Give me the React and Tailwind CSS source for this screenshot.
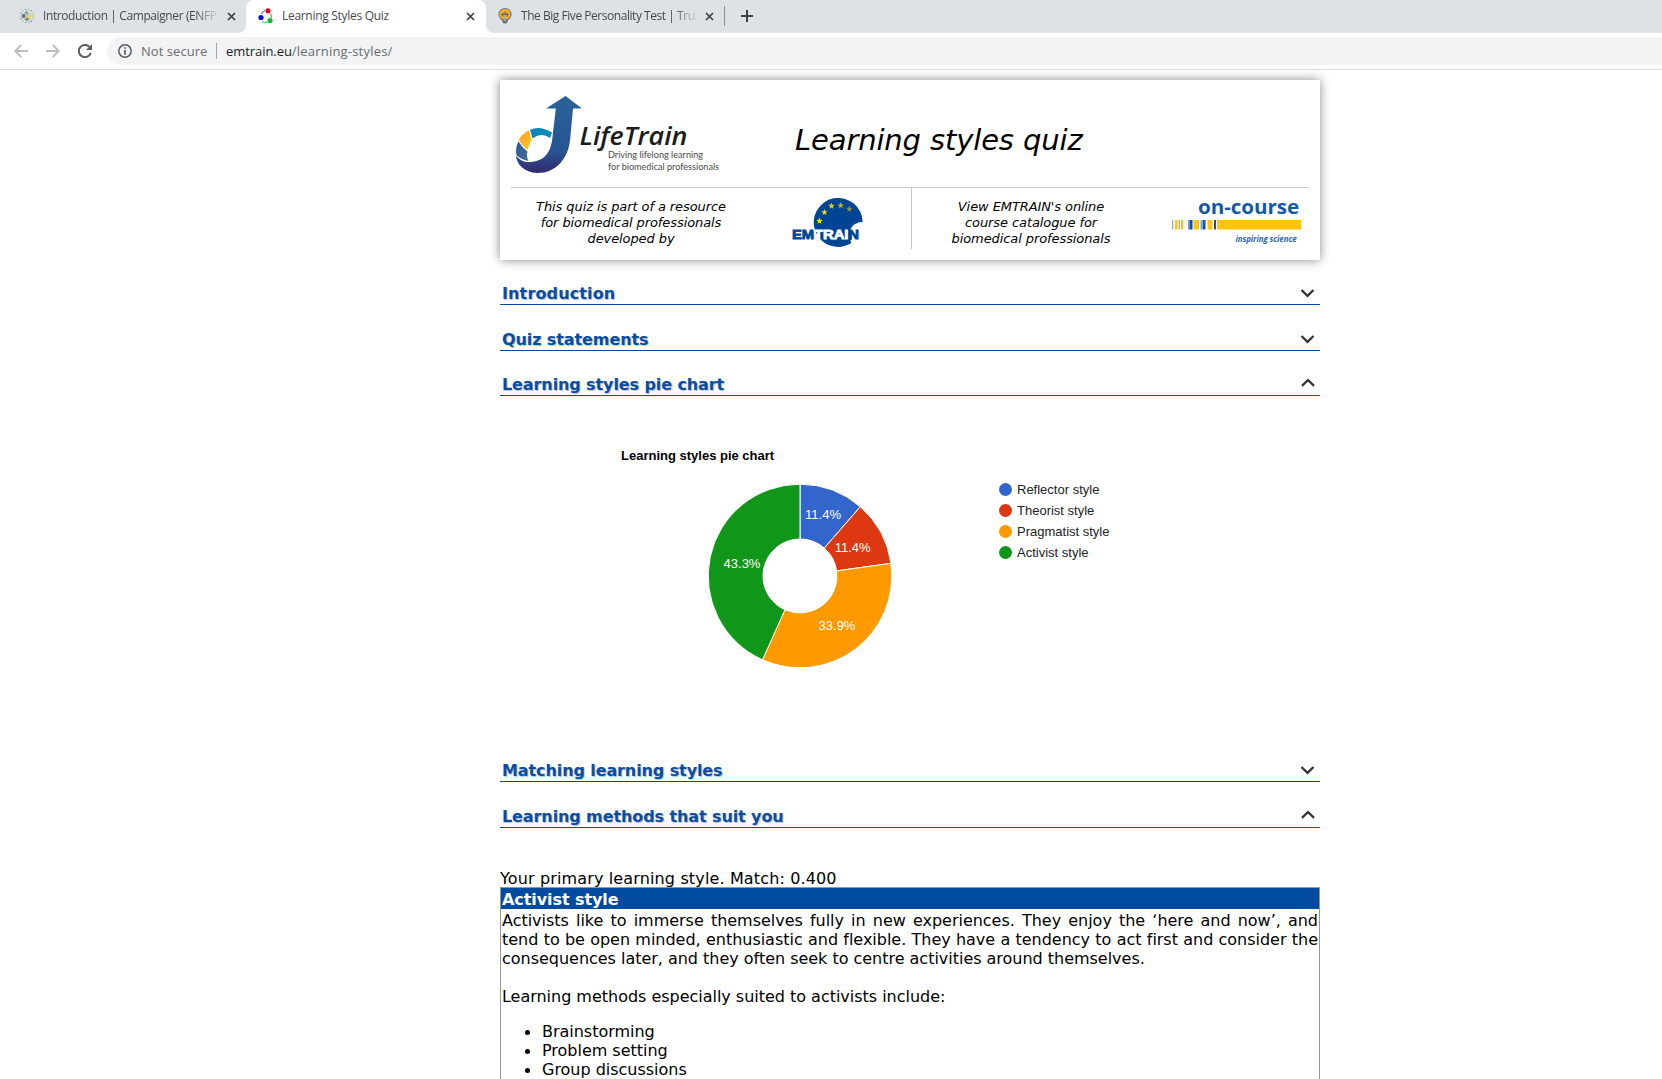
import React from "react";

const UI = "font-['Open_Sans','Noto_Sans',sans-serif]";

function CloseX() {
  return (
    <svg width="9" height="9" viewBox="0 0 9 9" className="shrink-0">
      <path d="M1 1L8 8M8 1L1 8" stroke="#3c4043" strokeWidth="1.7" fill="none" />
    </svg>
  );
}

function DotsFavicon() {
  const ring = Array.from({ length: 14 }, (_, i) => (i * Math.PI * 2) / 14);
  const colors = ["#7fa98a", "#c9c37a", "#8a7f8f", "#8db9a0"];
  return (
    <svg width="16" height="16" viewBox="0 0 16 16" className="shrink-0">
      {ring.map((a, i) => (
        <circle key={i} cx={8 + 6.6 * Math.cos(a)} cy={8 + 6.6 * Math.sin(a)} r="0.8" fill={colors[i % 4]} />
      ))}
      <circle cx="8" cy="8" r="4.6" fill="#c4cfc9" />
      <circle cx="7.5" cy="4.8" r="1.7" fill="#6fb3a5" />
      <circle cx="11" cy="8.2" r="2" fill="#f0dc3c" />
      <circle cx="4.6" cy="8" r="1.9" fill="#84607c" />
      <circle cx="8" cy="11.3" r="1.8" fill="#6f9b62" />
    </svg>
  );
}

function CycleFavicon() {
  return (
    <svg width="16" height="16" viewBox="0 0 16 16" className="shrink-0">
      <path d="M7 2.5Q4.300 3.500 3.500 6" stroke="#5d66e8" strokeWidth="1.100" fill="none" />
      <path d="M12.500 5.500Q14 8 13 10.500" stroke="#ec5a4a" strokeWidth="1.100" fill="none" />
      <path d="M4.500 13.500Q7 15.500 9.500 13.800" stroke="#38e03c" strokeWidth="1.200" fill="none" />
      <circle cx="10" cy="2.800" r="2.600" fill="#dc0c18" />
      <circle cx="3" cy="9.500" r="2.600" fill="#0a0adc" />
      <circle cx="12" cy="12.500" r="2.600" fill="#12b832" />
    </svg>
  );
}

function BulbFavicon() {
  return (
    <svg width="14" height="16" viewBox="0 0 14 16" className="shrink-0">
      <path d="M7 .7C3.300.7.900 3.200.900 6.300c0 2.400 1.500 3.500 2.600 5.200h7c1.100-1.700 2.600-2.800 2.600-5.200C13.100 3.200 10.700.7 7 .7z" fill="#f7b21f" stroke="#7b7b80" strokeWidth="1.200" />
      <path d="M4.200 11.500h5.600v2L8.500 15.400h-3L4.200 13.500z" fill="#77777c" />
      <path d="M3 6.500h8M7 3.500v9M4.800 4.500v4M9.200 4.500v4" stroke="#66666b" strokeWidth="1.200" fill="none" />
      <path d="M7 7v6" stroke="#eee" strokeWidth=".8" />
    </svg>
  );
}

function TabStrip() {
  return (
    <div className={`flex h-[33px] bg-[#dee1e6] text-xs text-[#45494d] ${UI}`}>
      <div className="flex h-full w-[246px] items-center pb-px pl-[19px]">
        <DotsFavicon />
        <div className="ml-2 w-[174px] overflow-hidden whitespace-nowrap leading-[30px] tracking-[-0.4px] [mask-image:linear-gradient(to_right,#000_152px,transparent_176px)]">
          Introduction | Campaigner (ENFP
        </div>
        <div className="ml-[9.500px] flex"><CloseX /></div>
      </div>
      <div className="relative flex h-full w-[240px] items-center rounded-t-lg bg-white pb-px pl-3">
        <svg width="8" height="8" viewBox="0 0 8 8" className="absolute bottom-0 -left-2"><path d="M8 0V8H0A8 8 0 0 0 8 0z" fill="#fff" /></svg>
        <svg width="8" height="8" viewBox="0 0 8 8" className="absolute bottom-0 -right-2"><path d="M0 0V8H8A8 8 0 0 1 0 0z" fill="#fff" /></svg>
        <CycleFavicon />
        <div className="ml-2 w-[174px] whitespace-nowrap leading-[30px] tracking-[-0.3px]">Learning Styles Quiz</div>
        <div className="ml-[9.500px] flex"><CloseX /></div>
      </div>
      <div className="flex h-full w-[238px] items-center pb-px pl-3">
        <BulbFavicon />
        <div className="ml-[9px] w-[175px] overflow-hidden whitespace-nowrap leading-[30px] tracking-[-0.46px] [mask-image:linear-gradient(to_right,#000_152px,transparent_178px)]">
          The Big Five Personality Test | Trui
        </div>
        <div className="ml-[8.500px] flex"><CloseX /></div>
      </div>
      <div className="mt-1.5 h-5 w-px bg-[#8a8d91]" />
      <svg width="12" height="12" viewBox="0 0 12 12" className="ml-4 mt-2.5">
        <path d="M6 0V12M0 6H12" stroke="#3c4043" strokeWidth="2" />
      </svg>
    </div>
  );
}

function Toolbar() {
  return (
    <div className={`flex h-[37px] items-center border-b border-[#dadce0] bg-white pl-[14px] text-[13px] ${UI}`}>
      <svg width="14" height="14" viewBox="0 0 14 14" className="shrink-0"><path d="M14 7H1.500M7.300.8L1.200 7l6.100 6.200" stroke="#babcbe" strokeWidth="1.800" fill="none" /></svg>
      <svg width="14" height="14" viewBox="0 0 14 14" className="ml-[18px] shrink-0"><path d="M0 7H12.500M6.700.8L12.800 7l-6.100 6.200" stroke="#babcbe" strokeWidth="1.800" fill="none" /></svg>
      <svg width="14" height="14" viewBox="0 0 14 14" className="ml-[18px] shrink-0">
        <path d="M12.800 8.800A6.100 6.100 0 1 1 11.300 2.700" stroke="#5a5d61" strokeWidth="2" fill="none" />
        <path d="M14 0V6H8z" fill="#5a5d61" />
      </svg>
      <div className="ml-[15px] flex h-7 flex-1 items-center rounded-l-full bg-[#f1f3f4] pl-[11px]">
        <svg width="14" height="14" viewBox="0 0 14 14" className="shrink-0">
          <circle cx="7" cy="7" r="6.200" fill="none" stroke="#5a5d61" strokeWidth="1.500" />
          <path d="M7 6V10.800M7 3.200V4.800" stroke="#5a5d61" strokeWidth="1.700" />
        </svg>
        <span className="ml-[9px] w-[75px] pt-0.5 tracking-[0.05px] text-[#696d71]">Not secure</span>
        <span className="h-4 w-px bg-[#a3a6a9]" />
        <span className="ml-[9px] pt-0.5 tracking-[-0.06px] text-[#202124]">emtrain.eu<span className="tracking-[0.2px] text-[#686c70]">/learning-styles/</span></span>
      </div>
    </div>
  );
}

function LifeTrainLogo() {
  return (
    <svg width="220" height="90" viewBox="510 90 220 90" className="shrink-0">
      <defs>
        <linearGradient id="hook" x1="0" y1="0" x2="0" y2="1">
          <stop offset="0" stopColor="#2a6299" />
          <stop offset=".72" stopColor="#265592" />
          <stop offset="1" stopColor="#34286c" />
        </linearGradient>
        <linearGradient id="amber" x1="0" y1="0" x2="1" y2="1">
          <stop offset="0" stopColor="#f79a2c" />
          <stop offset="1" stopColor="#ffcd1c" />
        </linearGradient>
        <linearGradient id="navy" x1="0" y1="0" x2="1" y2="1">
          <stop offset="0" stopColor="#285c92" />
          <stop offset="1" stopColor="#476b9c" />
        </linearGradient>
      </defs>
      <path d="M518.500 141.500Q515 148 516.500 155Q520.500 159.500 528.500 161Q526 156 527.500 151.500Q522 147.500 518.500 141.500z" fill="url(#navy)" />
      <path d="M528.800 130.300Q522.500 133.500 519 139.500Q522 146 527.800 150Q529 144 531.800 139.500Z" fill="url(#amber)" />
      <path d="M530 129.700Q540 125 552 132.500L550 138Q541.500 132 532.600 138.500Z" fill="#0d86b8" />
      <path d="M565.500 96L582 108.500H573L570.300 138C568.500 160 555 173 537.500 173C524 172.500 516.500 164 516 155.500C519.500 160.500 525 162.500 531 162C543 161 551 154 552.500 137L555.800 108.500H546z" fill="url(#hook)" />
      <text x="579.500" y="145" fontFamily="Open Sans, sans-serif" fontStyle="italic" fontWeight="600" fontSize="25" textLength="108" lengthAdjust="spacingAndGlyphs" fill="#1c1c1c">LifeTrain</text>
      <text x="608" y="158.400" fontFamily="Lato, sans-serif" fontSize="8.500" textLength="95" lengthAdjust="spacingAndGlyphs" fill="#4a4a4a">Driving lifelong learning</text>
      <text x="608" y="170.300" fontFamily="Lato, sans-serif" fontSize="8.500" textLength="111" lengthAdjust="spacingAndGlyphs" fill="#4a4a4a">for biomedical professionals</text>
    </svg>
  );
}

const star = (cx, cy, r) =>
  Array.from({ length: 10 }, (_, i) => {
    const a = -Math.PI / 2 + (i * Math.PI) / 5;
    const q = i % 2 ? r * 0.42 : r;
    return `${cx + q * Math.cos(a)},${cy + q * Math.sin(a)}`;
  }).join(" ");

function EmtrainLogo() {
  const stars = [[819.5, 221, "#ffe600"], [824.5, 212.300, "#f4de10"], [831.5, 206, "#d8cf22"], [840.7, 205.500, "#b3b036"], [849.300, 209, "#8d9446"]];
  return (
    <svg width="76" height="52" viewBox="790 197 76 52" className="shrink-0">
      <path d="M862.700 222.500A24.500 24.500 0 1 0 851.500 243Q849 240 852.500 239L858 229V222.500Z" fill="#004494" />
      <path d="M864 222.300Q854 221.500 850.500 229L852 239.500L864 241z" fill="#fff" />
      {stars.map(([x, y, c]) => <polygon key={x} points={star(x, y, 3.4)} fill={c} />)}
      <text x="792" y="238.600" fontFamily="Liberation Sans, sans-serif" fontWeight="700" fontSize="13" textLength="67" lengthAdjust="spacingAndGlyphs" strokeWidth=".8" fill="#004494" stroke="#004494">
        EM<tspan fill="#fff" stroke="#fff">TRAI</tspan>N
      </text>
    </svg>
  );
}

function OnCourseLogo() {
  const bars = [[1172, 1.300, "#8fb0d6"], [1175, 2.500, "#ffc40c"], [1178.5, 1.500, "#a8b8b0"], [1181, 2, "#ffc40c"], [1188, 1.500, "#7ba2cf"], [1189.5, 3, "#0f54a5"], [1193.5, 5.500, "#ffc40c"], [1200.5, 1.500, "#7ba2cf"], [1202.5, 3, "#0f54a5"], [1207.5, 5, "#ffc40c"], [1214, 2, "#1c4f8c"], [1217, 84.300, "#ffc40c"]];
  return (
    <svg width="136" height="58" viewBox="1170 191 136 58" className="shrink-0">
      <text x="1198" y="213.500" fontFamily="Open Sans, sans-serif" fontWeight="700" fontSize="20" textLength="101" lengthAdjust="spacingAndGlyphs" fill="#1259a8">on-course</text>
      {bars.map(([x, w, c]) => <rect key={x} x={x} y="220" width={w} height="9.500" fill={c} />)}
      <text x="1235.500" y="241.500" fontFamily="Open Sans, sans-serif" fontStyle="italic" fontWeight="700" fontSize="8" textLength="61" lengthAdjust="spacingAndGlyphs" fill="#2c66ae">inspiring science</text>
    </svg>
  );
}

function HeaderCard() {
  return (
    <header className="h-[180px] w-[820px] bg-white px-[11px] shadow-[0_0_10px_#888]">
      <div className="flex h-[108px] border-b border-[#c8c8c8] pt-2.5">
        <div className="-ml-px flex"><LifeTrainLogo /></div>
        <h1 className="ml-[65px] mt-8 whitespace-nowrap text-[29px] italic leading-9 tracking-[-0.13px]">Learning styles quiz</h1>
      </div>
      <div className="flex text-center text-[13px] leading-4 tracking-[-0.09px]">
        <p className="ml-2.5 mt-[11px] w-[220px] italic">This quiz is part of a resource<br />for biomedical professionals<br />developed by</p>
        <div className="ml-[49px] mt-[9px]"><EmtrainLogo /></div>
        <div className="ml-[45px] h-[61px] w-px bg-[#c8c8c8]" />
        <p className="ml-[9px] mt-[11px] w-[220px] italic">View EMTRAIN's online<br />course catalogue for<br />biomedical professionals</p>
        <div className="ml-[29px] mt-[3px]"><OnCourseLogo /></div>
      </div>
    </header>
  );
}

function Section({ title, open, className }) {
  return (
    <div className={`flex h-6 items-start justify-between border-b border-[#004a9f] pl-0.5 pr-[5px] ${className}`}>
      <h2 className={`whitespace-nowrap text-base font-bold leading-[25px] text-[#0a4ea2] [text-shadow:1px_1px_1px_#b5bccb] ${title === "Introduction" ? "tracking-[0.14px]" : "tracking-[-0.1px]"}`}>{title}</h2>
      <svg width="15" height="10" viewBox="0 0 15 10" className={open ? "mt-1.5" : "mt-[7px]"}>
        <path d={open ? "M2 7.800L8 2L14 7.800" : "M1.500 2L7.500 7.800L13.500 2"} stroke="#333" strokeWidth="2.300" fill="none" />
      </svg>
    </div>
  );
}

const slices = [
  { name: "Reflector style", color: "#3366cc", from: 0, to: 41.04, label: "11.4%", x: 823, y: 519 },
  { name: "Theorist style", color: "#dc3912", from: 41.04, to: 82.080, label: "11.4%", x: 852.7, y: 552 },
  { name: "Pragmatist style", color: "#ff9900", from: 82.080, to: 204.1, label: "33.9%", x: 837, y: 630 },
  { name: "Activist style", color: "#109618", from: 204.1, to: 360, label: "43.3%", x: 742, y: 568 },
];

function arc({ from, to }) {
  const p = (deg, r) => {
    const a = (deg * Math.PI) / 180;
    return `${800 + r * Math.sin(a)} ${576 - r * Math.cos(a)}`;
  };
  const big = to - from > 180 ? 1 : 0;
  return `M${p(from, 91.8)}A91.800 91.800 0 ${big} 1 ${p(to, 91.8)}L${p(to, 37)}A37 37 0 ${big} 0 ${p(from, 37)}Z`;
}

function Chart() {
  return (
    <div className="ml-[121px] mt-[50px] flex h-[325px] font-['Liberation_Sans',Arial,sans-serif] text-[13px]">
      <div className="w-[384px]">
        <div className="whitespace-nowrap font-bold leading-5">Learning styles pie chart</div>
        <svg width="200" height="200" viewBox="700 476 200 200" className="ml-[79px] mt-[10px]">
          {slices.map((s) => <path key={s.name} d={arc(s)} fill={s.color} stroke="#fff" strokeWidth="1" />)}
          {slices.map((s) => <text key={s.name} x={s.x} y={s.y} textAnchor="middle" fontSize="13" fill="#fff">{s.label}</text>)}
        </svg>
      </div>
      <ul className="mt-[33px] text-[#222]">
        {slices.map((s) => (
          <li key={s.name} className="flex h-[21px] items-center whitespace-nowrap">
            <svg width="13" height="13" viewBox="0 0 13 13" className="-ml-[6px] mr-[5px]"><circle cx="6.500" cy="6.500" r="6.500" fill={s.color} /></svg>
            {s.name}
          </li>
        ))}
      </ul>
    </div>
  );
}

export default function App() {
  return (
    <div className="h-[1079px] overflow-hidden bg-white">
      <TabStrip />
      <Toolbar />
      <div className="h-[1009px] overflow-hidden">
        <main className="ml-[500px] w-[820px] pt-2.5 font-['DejaVu_Sans',Verdana,sans-serif] text-base leading-[19px] text-black">
          <HeaderCard />
          <Section title="Introduction" className="mt-[21px]" />
          <Section title="Quiz statements" className="mt-[22px]" />
          <Section title="Learning styles pie chart" open className="mt-[21px]" />
          <Chart />
          <Section title="Matching learning styles" className="-mt-[13px]" />
          <Section title="Learning methods that suit you" open className="mt-[22px]" />
          <p className="mt-[41px] h-[18px] tracking-[0.14px]">Your primary learning style. Match: 0.400</p>
          <section className="h-[260px] border border-[#9b968c]">
            <h3 className="h-[21px] bg-[#004a9f] pl-px font-bold leading-[23px] tracking-[-0.08px] text-white">Activist style</h3>
            <div className="px-px pt-0.5 tracking-[-0.02px]">
              <p className="text-justify">
                Activists like to immerse themselves fully in new experiences. They enjoy the {"\u2018"}here and now{"\u2019"}, and tend to be open minded, enthusiastic and flexible. They have a tendency to act first and consider the consequences later, and they often seek to centre activities around themselves.
              </p>
              <p className="mt-[19px]">Learning methods especially suited to activists include:</p>
              <ul className="mt-4">
                {["Brainstorming", "Problem setting", "Group discussions"].map((t) => (
                  <li key={t} className="flex items-center pl-[23px]">
                    <span className="mr-3 mt-0.5 size-[5px] rounded-full bg-black" />
                    {t}
                  </li>
                ))}
              </ul>
            </div>
          </section>
        </main>
      </div>
    </div>
  );
}
